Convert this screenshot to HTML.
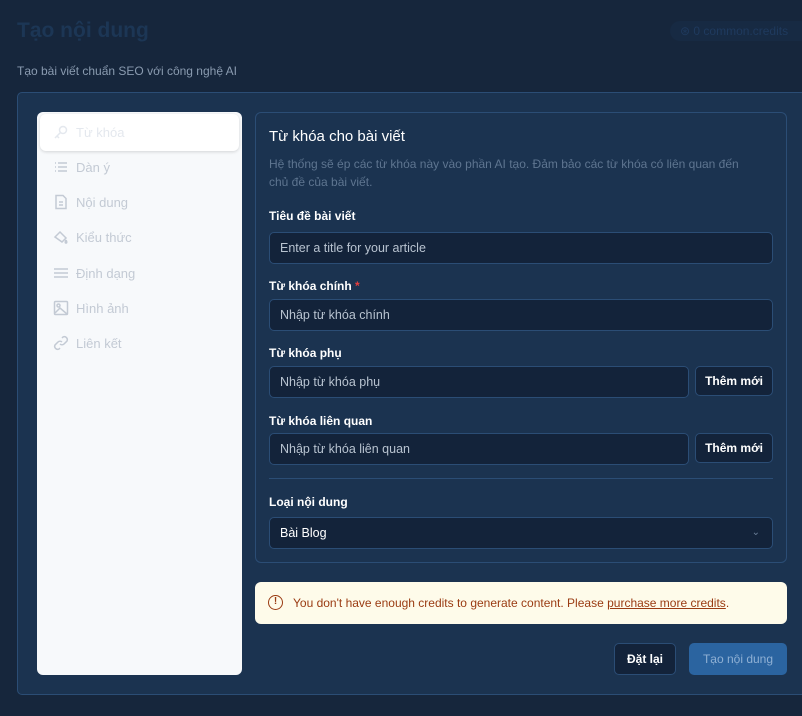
<!DOCTYPE html>
<html><head><meta charset="utf-8"><style>
*{box-sizing:border-box;margin:0;padding:0}
body{width:802px;height:716px;overflow:hidden;background:#16263c;font-family:"Liberation Sans",sans-serif;position:relative;color:#fff}
.abs{position:absolute}
.h1{left:17px;top:19px;font-size:21px;font-weight:bold;color:#1c3655}
.pill{left:670px;top:21px;width:140px;height:20px;border-radius:10px;background:#172a43;color:#1f3a5e;font-size:12px;line-height:20px;padding-left:10px}
.sub{left:17px;top:64px;font-size:12px;color:#8a9bb0}
.card{left:17px;top:92px;width:800px;height:603px;background:#1b3350;border:1px solid #2b4d75;border-radius:5px}
.side{left:37px;top:112px;width:205px;height:563px;background:#f7f9fb;border-radius:6px}
.act{left:40px;top:114px;width:199px;height:37px;background:#fff;border-radius:6px;box-shadow:0 1px 3px rgba(0,0,0,.15)}
.it{left:53px;font-size:13px;color:#c3cad4;display:flex;align-items:center;gap:7px}
.it svg{width:16px;height:16px;stroke:#c3cad4;fill:none;stroke-width:1.5}
.panel{left:255px;top:112px;width:532px;height:451px;border:1px solid #2b4d75;border-radius:6px}
.t{left:269px;top:128px;font-size:15px;color:#fff}
.d{left:269px;top:155px;width:490px;font-size:12px;line-height:18px;color:#5e7590}
.lb{left:269px;font-size:12px;font-weight:bold;color:#fff}
.in{left:269px;height:32px;background:#13233a;border:1px solid #2b4d75;border-radius:5px;font-size:12.5px;color:#b8c3d0;padding-left:10px;line-height:30px}
.btn{left:695px;width:78px;height:30px;border:1px solid #2b4d75;background:#13233a;border-radius:5px;font-size:12px;font-weight:bold;text-align:center;line-height:28px}
.alert{left:255px;top:582px;width:532px;height:42px;background:#fefbea;border-radius:6px;color:#9a3b12;font-size:12px;line-height:42px;padding-left:38px}
</style></head><body>
<div class="abs h1">Tạo nội dung</div>
<div class="abs pill">⊛ 0 common.credits</div>
<div class="abs sub">Tạo bài viết chuẩn SEO với công nghệ AI</div>
<div class="abs card"></div>
<div class="abs side"></div>
<div class="abs act"></div>
<div class="abs it" style="top:124px;color:#e4e8ee"><svg viewBox="0 0 16 16" style="stroke:#e4e8ee"><circle cx="10" cy="6" r="3.5"/><path d="M7.5 8.5 2 14M4 12l2 2"/></svg>Từ khóa</div>
<div class="abs it" style="top:159px"><svg viewBox="0 0 16 16"><path d="M2 4h1M2 8h1M2 12h1M5 4h9M5 8h9M5 12h9"/></svg>Dàn ý</div>
<div class="abs it" style="top:194px"><svg viewBox="0 0 16 16"><path d="M3 1.5h7l3 3v10H3z M6 8h4M6 11h4"/></svg>Nội dung</div>
<div class="abs it" style="top:229px"><svg viewBox="0 0 16 16"><path d="M2 8 7 3l6 6-4 4z M13 11c1 1.5 1 3 0 3s-1-1.5 0-3"/></svg>Kiểu thức</div>
<div class="abs it" style="top:265px"><svg viewBox="0 0 16 16"><path d="M1 4h14M1 8h14M1 12h14"/></svg>Định dạng</div>
<div class="abs it" style="top:300px"><svg viewBox="0 0 16 16"><rect x="1.5" y="1.5" width="13" height="13" rx="1"/><circle cx="5.5" cy="5.5" r="1.5"/><path d="M2 13l5-5 7 6"/></svg>Hình ảnh</div>
<div class="abs it" style="top:335px"><svg viewBox="0 0 16 16"><path d="M7 9a3 3 0 0 0 4 0l3-3a3 3 0 0 0-4-4l-1 1M9 7a3 3 0 0 0-4 0l-3 3a3 3 0 0 0 4 4l1-1"/></svg>Liên kết</div>
<div class="abs panel"></div>
<div class="abs t">Từ khóa cho bài viết</div>
<div class="abs d">Hệ thống sẽ ép các từ khóa này vào phần AI tạo. Đảm bảo các từ khóa có liên quan đến chủ đề của bài viết.</div>
<div class="abs lb" style="top:209px">Tiêu đề bài viết</div>
<div class="abs in" style="top:232px;width:504px">Enter a title for your article</div>
<div class="abs lb" style="top:279px">Từ khóa chính <span style="color:#e53e3e">*</span></div>
<div class="abs in" style="top:299px;width:504px">Nhập từ khóa chính</div>
<div class="abs lb" style="top:346px">Từ khóa phụ</div>
<div class="abs in" style="top:366px;width:420px">Nhập từ khóa phụ</div>
<div class="abs btn" style="top:366px">Thêm mới</div>
<div class="abs lb" style="top:414px">Từ khóa liên quan</div>
<div class="abs in" style="top:433px;width:420px">Nhập từ khóa liên quan</div>
<div class="abs btn" style="top:433px">Thêm mới</div>
<div class="abs" style="left:269px;top:478px;width:504px;height:1px;background:#2b4d75"></div>
<div class="abs lb" style="top:495px">Loại nội dung</div>
<div class="abs in" style="top:517px;width:504px;color:#fff">Bài Blog<span style="position:absolute;right:12px;color:#6a7f98;font-size:10px">&#8964;</span></div>
<div class="abs alert"><span style="position:absolute;left:13px;top:13px;width:15px;height:15px;border:1.5px solid #9a3b12;border-radius:50%;font-size:10px;line-height:12px;text-align:center;font-weight:bold">!</span>You don't have enough credits to generate content. Please <u>purchase more credits</u>.</div>
<div class="abs" style="left:614px;top:643px;width:62px;height:32px;background:#13233a;border:1px solid #2b4d75;border-radius:5px;font-size:12px;font-weight:bold;text-align:center;line-height:30px">Đặt lại</div>
<div class="abs" style="left:689px;top:643px;width:98px;height:32px;background:#2b64a0;border-radius:5px;font-size:12px;color:#8fb0d4;text-align:center;line-height:32px">Tạo nội dung</div>
</body></html>
